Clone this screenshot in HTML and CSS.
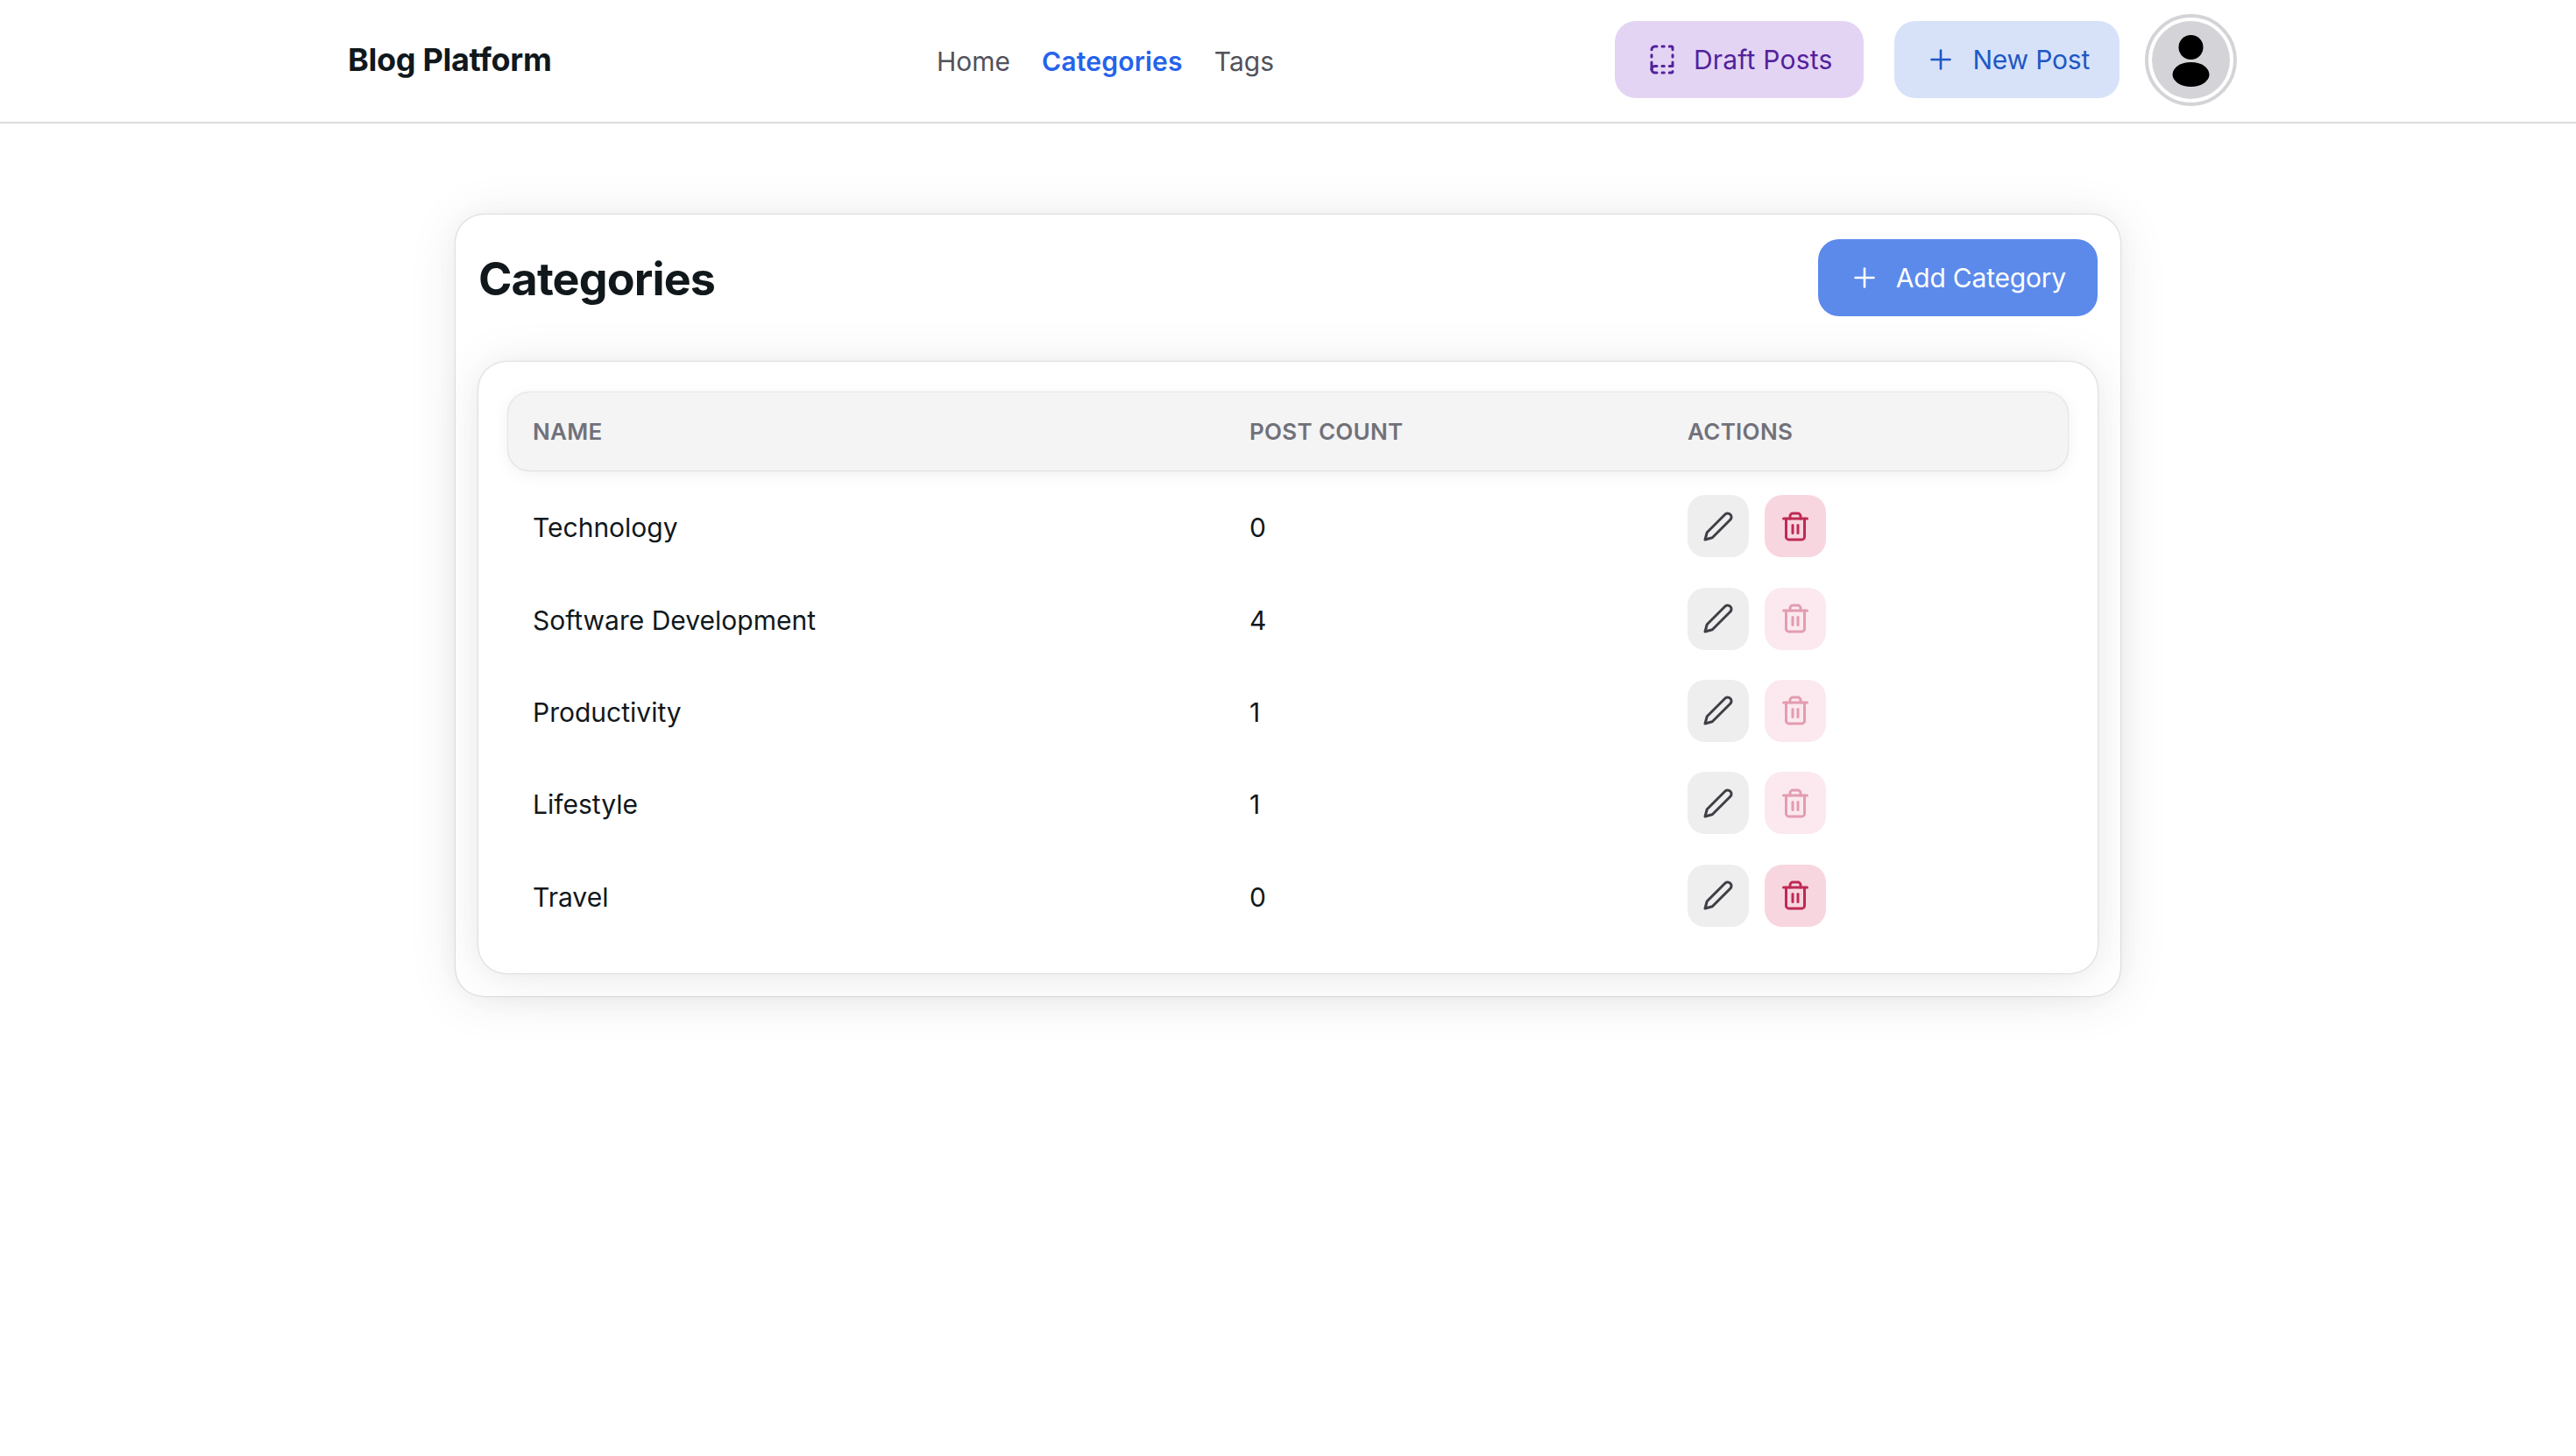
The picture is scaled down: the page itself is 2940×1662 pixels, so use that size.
FILE: index.html
```html
<!DOCTYPE html>
<html lang="en">
<head>
    <meta charset="UTF-8">
    <title>Categories - Blog Platform</title>
    <link rel="stylesheet" href="styles.css">
</head>
<body>
    <nav class="navbar">
        <a class="brand" href="#">Blog Platform</a>
        <div class="nav-links">
            <a href="#">Home</a>
            <a class="active" href="#">Categories</a>
            <a href="#">Tags</a>
        </div>
        <div class="nav-actions">
            <button class="btn btn-draft">
                <svg class="icon icon-bold" viewBox="0 0 24 24"><path d="M12 17h1.5"/><path d="M12 22h1.5"/><path d="M12 2h1.5"/><path d="M17.5 22H19a1 1 0 0 0 1-1"/><path d="M17.5 2H19a1 1 0 0 1 1 1v1.5"/><path d="M20 14v3h-2.5"/><path d="M20 8.5V10"/><path d="M4 10V8.5"/><path d="M4 19.5V14"/><path d="M4 4.5A2.5 2.5 0 0 1 6.5 2H8"/><path d="M8 22H6.5a1 1 0 0 1 0-5H8"/></svg>
                Draft Posts
            </button>
            <button class="btn btn-new">
                <svg class="icon" viewBox="0 0 24 24"><path d="M5 12h14"/><path d="M12 5v14"/></svg>
                New Post
            </button>
            <div class="avatar">
                <svg class="avatar-img" viewBox="0 0 89 89"><circle cx="44.5" cy="30" r="14"/><ellipse cx="44.5" cy="61" rx="21" ry="14"/></svg>
            </div>
        </div>
    </nav>

    <main class="card">
        <div class="card-header">
            <h1>Categories</h1>
            <button class="btn btn-add">
                <svg class="icon" viewBox="0 0 24 24"><path d="M5 12h14"/><path d="M12 5v14"/></svg>
                Add Category
            </button>
        </div>

        <div class="table-card">
            <div class="row head-row">
                <div>NAME</div>
                <div>POST COUNT</div>
                <div>ACTIONS</div>
            </div>

            <div class="row">
                <div class="cell">Technology</div>
                <div class="cell">0</div>
                <div class="actions">
                    <button class="action edit"><svg class="icon icon-bold" viewBox="0 0 24 24"><path d="M17 3a2.85 2.83 0 1 1 4 4L7.5 20.5 2 22l1.5-5.5Z"/></svg></button>
                    <button class="action delete"><svg class="icon icon-bold" viewBox="0 0 24 24"><path d="M3 6h18"/><path d="M19 6v14c0 1-1 2-2 2H7c-1 0-2-1-2-2V6"/><path d="M8 6V4c0-1 1-2 2-2h4c1 0 2 1 2 2v2"/><path d="M10 11v6"/><path d="M14 11v6"/></svg></button>
                </div>
            </div>
            <div class="row">
                <div class="cell">Software Development</div>
                <div class="cell">4</div>
                <div class="actions">
                    <button class="action edit"><svg class="icon icon-bold" viewBox="0 0 24 24"><path d="M17 3a2.85 2.83 0 1 1 4 4L7.5 20.5 2 22l1.5-5.5Z"/></svg></button>
                    <button class="action delete disabled"><svg class="icon icon-bold" viewBox="0 0 24 24"><path d="M3 6h18"/><path d="M19 6v14c0 1-1 2-2 2H7c-1 0-2-1-2-2V6"/><path d="M8 6V4c0-1 1-2 2-2h4c1 0 2 1 2 2v2"/><path d="M10 11v6"/><path d="M14 11v6"/></svg></button>
                </div>
            </div>
            <div class="row">
                <div class="cell">Productivity</div>
                <div class="cell">1</div>
                <div class="actions">
                    <button class="action edit"><svg class="icon icon-bold" viewBox="0 0 24 24"><path d="M17 3a2.85 2.83 0 1 1 4 4L7.5 20.5 2 22l1.5-5.5Z"/></svg></button>
                    <button class="action delete disabled"><svg class="icon icon-bold" viewBox="0 0 24 24"><path d="M3 6h18"/><path d="M19 6v14c0 1-1 2-2 2H7c-1 0-2-1-2-2V6"/><path d="M8 6V4c0-1 1-2 2-2h4c1 0 2 1 2 2v2"/><path d="M10 11v6"/><path d="M14 11v6"/></svg></button>
                </div>
            </div>
            <div class="row">
                <div class="cell">Lifestyle</div>
                <div class="cell">1</div>
                <div class="actions">
                    <button class="action edit"><svg class="icon icon-bold" viewBox="0 0 24 24"><path d="M17 3a2.85 2.83 0 1 1 4 4L7.5 20.5 2 22l1.5-5.5Z"/></svg></button>
                    <button class="action delete disabled"><svg class="icon icon-bold" viewBox="0 0 24 24"><path d="M3 6h18"/><path d="M19 6v14c0 1-1 2-2 2H7c-1 0-2-1-2-2V6"/><path d="M8 6V4c0-1 1-2 2-2h4c1 0 2 1 2 2v2"/><path d="M10 11v6"/><path d="M14 11v6"/></svg></button>
                </div>
            </div>
            <div class="row">
                <div class="cell">Travel</div>
                <div class="cell">0</div>
                <div class="actions">
                    <button class="action edit"><svg class="icon icon-bold" viewBox="0 0 24 24"><path d="M17 3a2.85 2.83 0 1 1 4 4L7.5 20.5 2 22l1.5-5.5Z"/></svg></button>
                    <button class="action delete"><svg class="icon icon-bold" viewBox="0 0 24 24"><path d="M3 6h18"/><path d="M19 6v14c0 1-1 2-2 2H7c-1 0-2-1-2-2V6"/><path d="M8 6V4c0-1 1-2 2-2h4c1 0 2 1 2 2v2"/><path d="M10 11v6"/><path d="M14 11v6"/></svg></button>
                </div>
            </div>
        </div>
    </main>
</body>
</html>
```

FILE: styles.css
```css
body {
    margin: 0;
    min-height: 100vh;
    background: #fff;
    color: #11181c;
    font-family: Inter, "Liberation Sans", sans-serif;
}

.navbar {
    display: flex;
    align-items: center;
    height: 136px;
    padding: 0 387px 3px 397px;
    border-bottom: 2px solid #dcdcdc;
}

.navbar a {
    text-decoration: none;
}

.brand {
    width: 672px;
    color: #11181c;
    font-size: 36px;
    font-weight: 700;
    letter-spacing: -0.3px;
}

.nav-links {
    display: flex;
    gap: 36px;
    padding-top: 3px;
    font-size: 30px;
}

.nav-links a {
    color: #52525b;
}

.nav-links a.active {
    color: #2563eb;
    font-weight: 600;
    letter-spacing: 0.2px;
}

.nav-actions {
    display: flex;
    align-items: center;
    margin-left: auto;
}

.btn {
    display: flex;
    align-items: center;
    gap: 18px;
    height: 88px;
    padding: 0 36px 0 35px;
    border: none;
    border-radius: 24px;
    font-family: inherit;
    font-size: 30px;
    letter-spacing: -0.2px;
    cursor: pointer;
}

.icon {
    width: 36px;
    height: 36px;
    fill: none;
    stroke: currentColor;
    stroke-width: 1.75;
    stroke-linecap: round;
    stroke-linejoin: round;
}

.icon-bold {
    stroke-width: 2;
}

.btn-draft {
    padding-left: 36px;
    background: #e4d4f4;
    color: #52229b;
    letter-spacing: 0.2px;
}

.btn-new {
    margin-left: 35px;
    padding-right: 34px;
    background: #d7e2f9;
    color: #1f58c4;
}

.btn-add {
    background: #5b8aeb;
    color: #fff;
}

.avatar {
    box-sizing: border-box;
    width: 105px;
    height: 105px;
    margin-left: 29px;
    padding: 4px;
    border: 4px solid #d4d4d8;
    border-radius: 50%;
}

.avatar-img {
    display: block;
    width: 89px;
    height: 89px;
    border-radius: 50%;
    background: #d4d4d8;
    fill: #000;
}

.card {
    width: 1848px;
    margin: 104px auto 0;
    padding: 28px 26px 26px;
    border-radius: 32px;
    box-shadow: 0 0 30px rgba(0, 0, 0, 0.03), 0 4px 60px rgba(0, 0, 0, 0.08), 0 0 2px rgba(0, 0, 0, 0.3);
}

.card-header {
    display: flex;
    align-items: center;
    justify-content: space-between;
    margin-bottom: 52px;
}

h1 {
    margin: 0;
    padding-top: 2px;
    font-size: 52px;
    font-weight: 700;
    letter-spacing: -0.86px;
}

.table-card {
    padding: 35px 34px 36px;
    border-radius: 32px;
    box-shadow: 0 0 30px rgba(0, 0, 0, 0.03), 0 4px 60px rgba(0, 0, 0, 0.08), 0 0 2px rgba(0, 0, 0, 0.3);
}

.row {
    display: grid;
    grid-template-columns: 818px 500px 1fr;
    align-items: center;
    height: 105.4px;
    padding: 0 27px 0 28px;
    font-size: 30px;
}

.cell {
    padding-top: 3px;
}

.head-row {
    height: 89px;
    margin-bottom: 11px;
    border-radius: 24px;
    background: #f4f4f5;
    box-shadow: 0 0 10px rgba(0, 0, 0, 0.02), 0 4px 20px rgba(0, 0, 0, 0.06), 0 0 2px rgba(0, 0, 0, 0.25);
    color: #71717a;
    font-size: 26px;
    font-weight: 600;
    letter-spacing: 0.3px;
}

.actions {
    display: flex;
    gap: 18px;
}

.action {
    display: flex;
    align-items: center;
    justify-content: center;
    width: 70px;
    height: 71px;
    padding: 0;
    border: none;
    border-radius: 20px;
    cursor: pointer;
}

.edit {
    background: #eeeeef;
    color: #3f3f46;
}

.delete {
    background: #f8d6e0;
    color: #be2a54;
}

.delete.disabled {
    background: #fbe9ef;
    color: #e39cb0;
}
```
